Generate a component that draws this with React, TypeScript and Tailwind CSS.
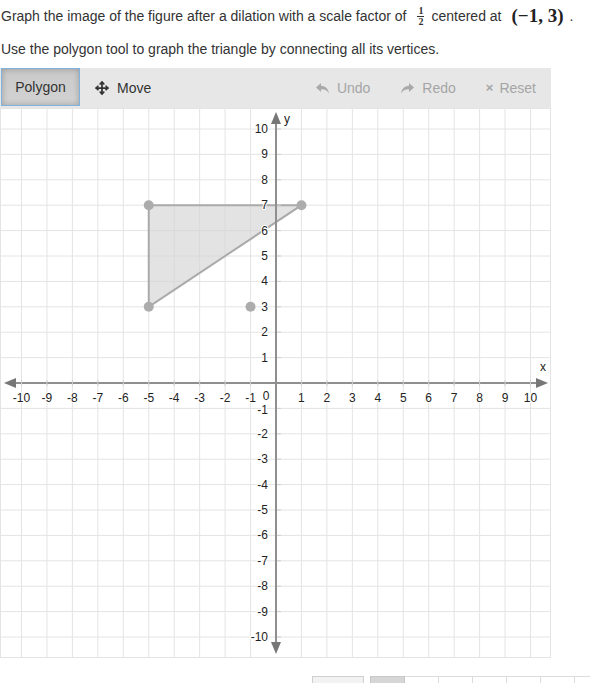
import { Move } from "lucide-react";

const UX = 25.45;
const UY = 25.4;
const OX = 276;
const OY = 275;

const px = (x: number) => OX + x * UX;
const py = (y: number) => OY - y * UY;

const ticks = [-10, -9, -8, -7, -6, -5, -4, -3, -2, -1, 1, 2, 3, 4, 5, 6, 7, 8, 9, 10];

function Graph() {
  const tri = [
    [-5, 7],
    [1, 7],
    [-5, 3],
  ];

  return (
    <svg width={551} height={550} className="block">
      {/* grid */}
      {ticks.map((t) => (
        <line key={"v" + t} x1={px(t)} y1={0} x2={px(t)} y2={550} stroke="#e4e4e4" strokeWidth={1} />
      ))}
      {ticks.map((t) => (
        <line key={"h" + t} x1={0} y1={py(t)} x2={551} y2={py(t)} stroke="#e4e4e4" strokeWidth={1} />
      ))}
      <rect x={0.5} y={0.5} width={550} height={549} fill="none" stroke="#e4e4e4" />

      {/* triangle */}
      <polygon
        points={tri.map(([x, y]) => `${px(x)},${py(y)}`).join(" ")}
        fill="#d4d4d4"
        fillOpacity={0.65}
        stroke="#aaaaaa"
        strokeWidth={2}
      />

      {/* axes */}
      <line x1={12} y1={OY} x2={540} y2={OY} stroke="#8f8f8f" strokeWidth={2} />
      <line x1={OX} y1={12} x2={OX} y2={538} stroke="#8f8f8f" strokeWidth={2} />
      <polygon points={`4,${OY} 16,${OY - 5} 16,${OY + 5}`} fill="#777" />
      <polygon points={`548,${OY} 536,${OY - 5} 536,${OY + 5}`} fill="#777" />
      <polygon points={`${OX},4 ${OX - 5},16 ${OX + 5},16`} fill="#777" />
      <polygon points={`${OX},546 ${OX - 5},534 ${OX + 5},534`} fill="#777" />

      {/* tick marks */}
      {ticks.map((t) => (
        <line key={"tx" + t} x1={px(t)} y1={OY - 3} x2={px(t)} y2={OY + 3} stroke="#cfcfcf" />
      ))}
      {ticks.map((t) => (
        <line key={"ty" + t} x1={OX + 1} y1={py(t)} x2={OX + 5} y2={py(t)} stroke="#cfcfcf" />
      ))}

      {/* labels */}
      <g
        fontFamily="'Liberation Sans', Arial, sans-serif"
        fontSize={12}
        fill="#222"
        stroke="#fff"
        strokeWidth={2}
        paintOrder="stroke"
      >
        {ticks.map((t) => (
          <text key={"lx" + t} x={px(t)} y={OY + 19} textAnchor="middle">
            {t}
          </text>
        ))}
        <text x={OX - 10} y={OY + 17} textAnchor="middle">
          0
        </text>
        {ticks.map((t) => (
          <text key={"ly" + t} x={OX - 8} y={py(t) + (t === -1 ? 6 : 4)} textAnchor="end">
            {t}
          </text>
        ))}
        <text x={OX + 8} y={15}>
          y
        </text>
        <text x={540} y={263}>
          x
        </text>
      </g>

      {/* points */}
      {tri.map(([x, y]) => (
        <circle key={`${x}-${y}`} cx={px(x)} cy={py(y)} r={5} fill="#acacac" />
      ))}
      <circle cx={px(-1)} cy={py(3)} r={5} fill="#acacac" />
    </svg>
  );
}

function UndoIcon() {
  return (
    <svg width="13" height="11" viewBox="0 0 13 11" className="mr-[8px]">
      <path d="M5 0 L0 4.5 L5 9 L5 6.2 C8.5 6 11 7 13 10.5 C12.3 6 9.5 3 5 2.8 Z" fill="#a9a9a9" />
    </svg>
  );
}

function RedoIcon() {
  return (
    <svg width="13" height="11" viewBox="0 0 13 11" className="mr-[8px]">
      <path d="M8 0 L13 4.5 L8 9 L8 6.2 C4.5 6 2 7 0 10.5 C0.7 6 3.5 3 8 2.8 Z" fill="#a9a9a9" />
    </svg>
  );
}

export default function App() {
  return (
    <div className="w-[590px] h-[683px] overflow-hidden bg-white font-['Liberation_Sans',Arial,sans-serif] text-[#333]">
      <div className="flex items-center pl-px pt-[4px] h-[28px] text-[14px] whitespace-nowrap">
        <span>Graph the image of the figure after a dilation with a scale factor of</span>
        <span className="inline-flex flex-col items-center ml-[11px] mr-[7px] font-['Liberation_Serif',serif] font-bold text-[10px] leading-[10px]">
          <span>1</span>
          <span className="w-[7px] border-t border-[#333]" />
          <span>2</span>
        </span>
        <span>centered at</span>
        <span className="ml-[10px] font-['Liberation_Serif',serif] font-bold text-[19px] text-[#222]">(−1, 3)</span>
        <span className="ml-[6px]">.</span>
      </div>
      <div className="pl-px mt-[12px] text-[14px] leading-[18px]">
        Use the polygon tool to graph the triangle by connecting all its vertices.
      </div>

      <div className="mt-[10px] w-[551px] h-[40px] bg-[#e7e7e7] flex items-center text-[14px]">
        <div className="ml-px h-[38px] w-[79px] self-start flex items-center justify-center border border-[#7fb2de] bg-gradient-to-b from-[#c9c9c9] to-[#d3d3d3] shadow-[inset_0_0_6px_rgba(0,0,0,0.25)] text-[#333]">
          Polygon
        </div>
        <div className="ml-[15px] flex items-center text-[#333]">
          <Move size={14} strokeWidth={3} className="mr-[8px]" />
          Move
        </div>
        <div className="ml-auto flex items-center text-[#a5a5a5]">
          <UndoIcon />
          Undo
        </div>
        <div className="ml-[31px] flex items-center text-[#a5a5a5]">
          <RedoIcon />
          Redo
        </div>
        <div className="ml-[30px] mr-[15px] flex items-center text-[#a5a5a5]">
          <span className="mr-[6px] text-[13px] font-bold">×</span>
          Reset
        </div>
      </div>

      <Graph />

      <div className="mt-[18px] flex pl-[312px]">
        <div className="shrink-0 w-[52px] h-[30px] border border-[#cfcfcf] bg-[#f2f2f2]" />
        <div className="shrink-0 ml-[6px] flex">
          <div className="shrink-0 w-[35px] h-[30px] border border-[#c8c8c8] bg-[#d6d6d6]" />
          {[0, 1, 2, 3, 4, 5].map((i) => (
            <div key={i} className="shrink-0 w-[34px] h-[30px] border border-l-0 border-[#dcdcdc] bg-white" />
          ))}
        </div>
      </div>
    </div>
  );
}
